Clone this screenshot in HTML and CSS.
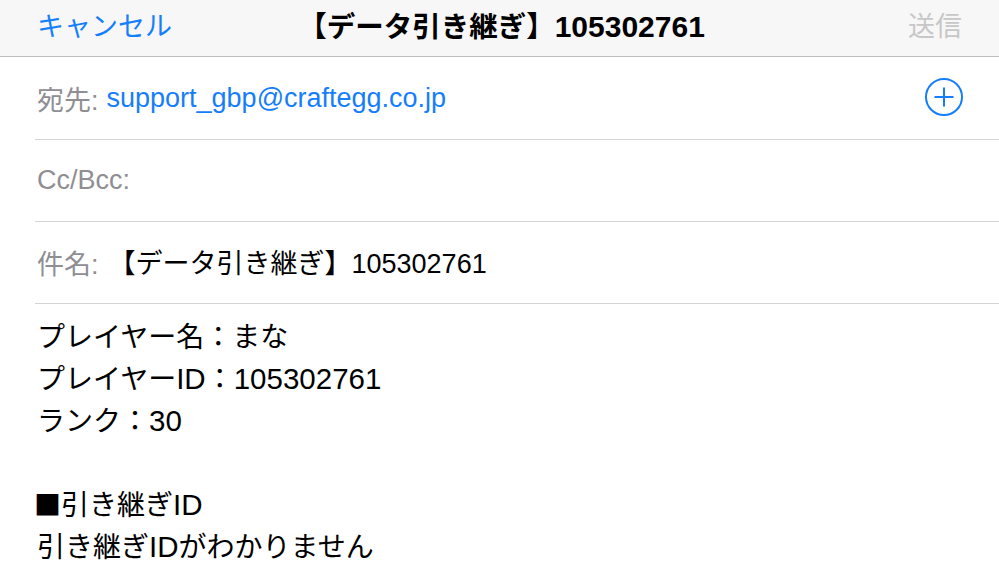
FILE: index.html
```html
<!DOCTYPE html>
<html lang="ja">
<head>
<meta charset="utf-8">
<link rel="stylesheet" href="styles.css">
</head>
<body>
<div class="nav">
  <div class="nav-left">キャンセル</div>
  <div class="nav-title">【データ引き継ぎ】<span class="tnum">105302761</span></div>
  <div class="nav-right">送信</div>
</div>
<div class="fields">
  <div class="row row-first">
    <span class="label">宛先:</span>
    <span class="addr">support_gbp@craftegg.co.jp</span>
    <svg class="add" width="40" height="40" viewBox="0 0 40 40">
      <circle cx="20" cy="20" r="18" fill="none" stroke="#157efb" stroke-width="2"/>
      <path d="M20 10.5 V29.5 M10.5 20 H29.5" stroke="#157efb" stroke-width="2" fill="none"/>
    </svg>
  </div>
  <div class="row">
    <span class="label">Cc/Bcc:</span>
  </div>
  <div class="row">
    <span class="label">件名:</span>
    <span class="subject">【データ引き継ぎ】105302761</span>
  </div>
</div>
<div class="body">
  <div class="line">プレイヤー名：まな</div>
  <div class="line">プレイヤー<span class="bnum">ID</span>：<span class="bnum">105302761</span></div>
  <div class="line">ランク：<span class="bnum">30</span></div>
  <div class="line">&nbsp;</div>
  <div class="line"><span class="sq">■</span>引き継ぎ<span class="bnum">ID</span></div>
  <div class="line">引き継ぎ<span class="bnum">ID</span>がわかりません</div>
</div>
</body>
</html>
```
FILE: styles.css
```css
html, body {
  margin: 0;
  padding: 0;
  background: #ffffff;
  font-family: "Liberation Sans", "Noto Sans CJK JP", sans-serif;
  width: 999px;
  height: 562px;
  overflow: hidden;
}
.nav {
  height: 48px;
  padding: 0 37px 8px 37px;
  background: #f7f7f7;
  border-bottom: 1px solid #bdbdbd;
  display: grid;
  grid-template-columns: 1fr auto 1fr;
  align-items: center;
  font-size: 27px;
}
.nav-left {
  color: #157efb;
  justify-self: start;
}
.nav-title {
  font-weight: bold;
  font-size: 28.5px;
  color: #000;
  padding-left: 4px;
}
.tnum {
  font-size: 30px;
}
.nav-right {
  color: #c7c7c7;
  justify-self: end;
}
.fields {
  margin-left: 35px;
}
.row {
  height: 81px;
  border-bottom: 1px solid #d4d4d4;
  display: flex;
  align-items: center;
  padding-left: 2px;
  font-size: 27px;
}
.row-first {
  height: 82px;
}
.label {
  color: #8e8e93;
  margin-right: 8px;
}
.addr {
  color: #157efb;
  flex: 1;
}
.subject {
  color: #000;
  margin-left: 2px;
  margin-top: -2px;
}
.add {
  margin-right: 35px;
  margin-top: -2px;
}
.body {
  padding: 13px 37px 0 37px;
  font-size: 28px;
  color: #000;
}
.line {
  white-space: nowrap;
  height: 42px;
  line-height: 42px;
}
.line span {
  line-height: 1;
}
.bnum {
  font-size: 29.5px;
}
.sq {
  font-family: "Noto Sans CJK JP", sans-serif;
  font-size: 27px;
  margin-left: -3px;
}
```
